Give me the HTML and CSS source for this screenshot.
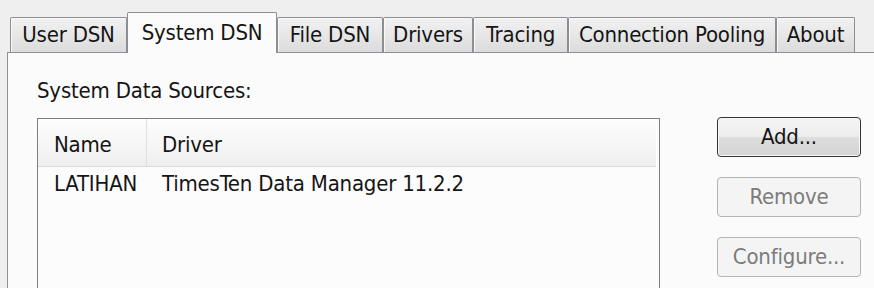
FILE: index.html
```html
<!DOCTYPE html>
<html>
<head>
<meta charset="utf-8">
<link rel="stylesheet" href="styles.css">
</head>
<body>
<div class="dialog">
  <div class="tabs">
    <div class="tab tab-user">User DSN</div>
    <div class="tab tab-system selected">System DSN</div>
    <div class="tab tab-file">File DSN</div>
    <div class="tab tab-drivers">Drivers</div>
    <div class="tab tab-tracing">Tracing</div>
    <div class="tab tab-pooling">Connection Pooling</div>
    <div class="tab tab-about">About</div>
  </div>
  <div class="panel">
    <div class="label">System Data Sources:</div>
    <div class="content">
      <div class="list">
        <div class="list-header">
          <div class="col col-name">Name</div>
          <div class="col col-driver">Driver</div>
        </div>
        <div class="list-row">
          <div class="col col-name">LATIHAN</div>
          <div class="col col-driver">TimesTen Data Manager 11.2.2</div>
        </div>
      </div>
      <div class="buttons">
        <div class="btn default">Add...</div>
        <div class="btn disabled">Remove</div>
        <div class="btn disabled">Configure...</div>
      </div>
    </div>
  </div>
</div>
</body>
</html>
```
FILE: styles.css
```css
html, body {
  margin: 0;
  padding: 0;
  background: #efefef;
}
.dialog {
  width: 874px;
  height: 288px;
  overflow: hidden;
  font-family: "DejaVu Sans Condensed", "DejaVu Sans", "Liberation Sans", sans-serif;
  font-size: 22px;
  letter-spacing: -0.2px;
  color: #151515;
  background: #efefef;
}
.tabs {
  display: flex;
  align-items: flex-end;
  height: 40px;
  padding: 12px 0 0 10px;
}
.tab {
  flex: none;
  box-sizing: border-box;
  height: 35px;
  padding: 0;
  text-align: center;
  line-height: 33px;
  border: 1px solid #8c8e94;
  border-bottom: none;
  border-radius: 2px 2px 0 0;
  background: linear-gradient(#f1f1f1, #e6e6e6 55%, #dbdbdb);
  box-shadow: inset 1px 1px 0 #f8f8f8;
  white-space: nowrap;
}
.tab-user { width: 117px; }
.tab-system { width: 150px; }
.tab-file { width: 106px; }
.tab-drivers { width: 90px; }
.tab-tracing { width: 95px; }
.tab-pooling { width: 208px; }
.tab-about { width: 79px; }
.tab.selected {
  height: 41px;
  margin-bottom: -1px;
  line-height: 40px;
  background: #fbfbfb;
  box-shadow: none;
  position: relative;
  z-index: 1;
}
.panel {
  margin-left: 7px;
  border-top: 1px solid #8c8e94;
  border-left: 1px solid #8c8e94;
  background: #fbfbfb;
  height: 300px;
  padding: 23px 0 0 29px;
  box-sizing: border-box;
}
.label {
  line-height: 30px;
}
.content {
  display: flex;
  align-items: flex-start;
  margin-top: 12px;
}
.list {
  width: 623px;
  height: 220px;
  box-sizing: border-box;
  border: 1px solid #7a7e86;
  background: #fcfcfc;
  flex: none;
}
.list-header {
  display: flex;
  height: 48px;
  box-sizing: border-box;
  margin-right: 3px;
  padding: 11px 0 6px;
  line-height: 30px;
  border-bottom: 1px solid #d8d8d8;
  background: linear-gradient(#fdfdfd, #f6f6f6 55%, #eeeeee);
}
.list-row {
  display: flex;
  padding-top: 2px;
  line-height: 30px;
}
.col {
  box-sizing: border-box;
  white-space: nowrap;
}
.col-name {
  width: 109px;
  padding-left: 16px;
}
.col-driver {
  padding-left: 15px;
}
.list-header .col-name {
  border-right: 1px solid #e0e0e0;
  margin: -11px 0 -6px;
  padding-top: 11px;
}
.buttons {
  display: flex;
  flex-direction: column;
  gap: 20px;
  margin-left: 57px;
  margin-top: -1px;
}
.btn {
  width: 144px;
  height: 40px;
  box-sizing: border-box;
  border-radius: 4px;
  text-align: center;
  line-height: 38px;
}
.btn.default {
  border: 1px solid #333333;
  background: linear-gradient(#f4f4f4, #ededed 48%, #dddddd 52%, #d4d4d4);
  box-shadow: inset 0 0 0 1px #f8f8f8;
}
.btn.disabled {
  border: 1px solid #b2b4b6;
  background: #f4f4f4;
  color: #7c7c7c;
}
```
